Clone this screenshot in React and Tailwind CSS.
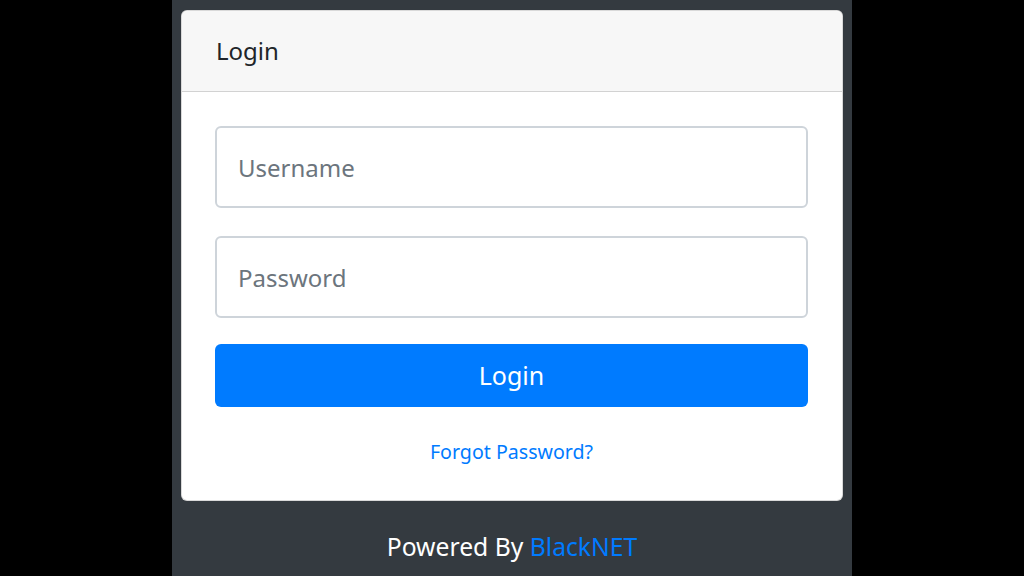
export default function App() {
  return (
    <div
      className="w-[1024px] h-[576px] bg-black flex justify-center overflow-hidden"
      style={{ fontFamily: '"Noto Sans", "Open Sans", sans-serif' }}
    >
      <div className="w-[680px] h-full bg-[#343a40] flex flex-col px-[9px] pt-[10px]">
        {/* card */}
        <div className="bg-white rounded-[6px] border border-black/15 flex flex-col">
          <div className="h-[81px] px-[34px] flex items-center bg-[#f7f7f7] border-b border-black/15 rounded-t-[6px]">
            <span className="text-[24px] text-[#212529]">Login</span>
          </div>
          <div className="pl-[33px] pr-[34px] pt-[34px] pb-[34px] flex flex-col">
            <input
              type="text"
              placeholder="Username"
              className="h-[82px] w-full px-[21px] text-[24px] text-[#495057] placeholder:text-[#6c757d] border-2 border-[#ced4da] rounded-[6px] outline-none"
            />
            <input
              type="password"
              placeholder="Password"
              className="mt-[28px] h-[82px] w-full px-[21px] text-[24px] text-[#495057] placeholder:text-[#6c757d] border-2 border-[#ced4da] rounded-[6px] outline-none"
            />
            <button className="mt-[26px] h-[63px] w-full bg-[#007bff] text-white text-[25px] rounded-[6px]">
              Login
            </button>
            <div className="mt-[30px] text-center">
              <a className="text-[19.6px] text-[#007bff]">Forgot Password?</a>
            </div>
          </div>
        </div>
        <div className="flex-1 flex justify-center pt-[27px] text-[24.7px] leading-[38px] text-white">
          <span>
            Powered By <span className="text-[#007bff]">BlackNET</span>
          </span>
        </div>
      </div>
    </div>
  );
}
